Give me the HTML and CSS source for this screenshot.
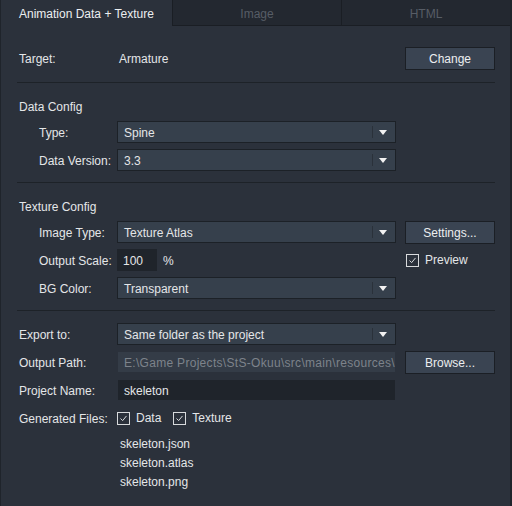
FILE: index.html
```html
<!DOCTYPE html>
<html lang="en">
<head>
  <meta charset="UTF-8">
  <title>Export</title>
  <link rel="stylesheet" href="styles.css">
</head>
<body>
  <div class="window">
    <!-- Tabs -->
    <div class="tabs">
      <div class="tab active">Animation Data + Texture</div>
      <div class="tab">Image</div>
      <div class="tab">HTML</div>
    </div>

    <div class="content">
      <div class="row first">
        <div class="label">Target:</div>
        <div class="value">Armature</div>
        <button class="btn">Change</button>
      </div>
      <div class="sep top"></div>

      <!-- Data Config -->
      <div class="title">Data Config</div>
      <div class="row indent">
        <div class="label">Type:</div>
        <div class="select"><span>Spine</span><i class="arrow"></i></div>
      </div>
      <div class="row indent">
        <div class="label">Data Version:</div>
        <div class="select"><span>3.3</span><i class="arrow"></i></div>
      </div>
      <div class="sep"></div>

      <!-- Texture Config -->
      <div class="title">Texture Config</div>
      <div class="row indent">
        <div class="label">Image Type:</div>
        <div class="select"><span>Texture Atlas</span><i class="arrow"></i></div>
        <button class="btn">Settings...</button>
      </div>
      <div class="row indent">
        <div class="label">Output Scale:</div>
        <div class="input small">100</div>
        <div class="unit">%</div>
        <label class="check preview"><span class="box"><svg viewBox="0 0 13 13"><path d="M3 6.5 L5.5 9 L10 3.5" /></svg></span>Preview</label>
      </div>
      <div class="row indent">
        <div class="label">BG Color:</div>
        <div class="select"><span>Transparent</span><i class="arrow"></i></div>
      </div>
      <div class="sep"></div>

      <!-- Export -->
      <div class="row first-export">
        <div class="label">Export to:</div>
        <div class="select"><span>Same folder as the project</span><i class="arrow"></i></div>
      </div>
      <div class="row">
        <div class="label">Output Path:</div>
        <div class="field disabled">E:\Game Projects\StS-Okuu\src\main\resources\</div>
        <button class="btn">Browse...</button>
      </div>
      <div class="row">
        <div class="label">Project Name:</div>
        <div class="field dark">skeleton</div>
      </div>
      <div class="row gen">
        <div class="label">Generated Files:</div>
        <label class="check"><span class="box"><svg viewBox="0 0 13 13"><path d="M3 6.5 L5.5 9 L10 3.5" /></svg></span>Data</label>
        <label class="check"><span class="box"><svg viewBox="0 0 13 13"><path d="M3 6.5 L5.5 9 L10 3.5" /></svg></span>Texture</label>
      </div>
      <div class="files">
        <div>skeleton.json</div>
        <div>skeleton.atlas</div>
        <div>skeleton.png</div>
      </div>
    </div>
  </div>
</body>
</html>
```

FILE: styles.css
```css
/* General Styling */
body {
  margin: 0;
  background: #2b313b;
  font-family: "Liberation Sans", Arial, sans-serif;
  font-size: 12px;
  color: #e4e6e8;
}

.window {
  width: 512px;
  height: 506px;
  box-sizing: border-box;
  border-left: 1px solid #1f242b;
  border-right: 2px solid #1f242b;
  overflow: hidden;
}

/* Tabs */
.tabs {
  display: flex;
  height: 26px;
  margin-left: -1px;
}

.tab {
  flex: 1;
  display: flex;
  align-items: center;
  justify-content: center;
  padding-top: 2px;
  background: #232830;
  color: #575d66;
  border-left: 1px solid #1a1e24;
  border-bottom: 1px solid #1a1e24;
  box-sizing: border-box;
}

.tab.active {
  flex: none;
  width: 172px;
  justify-content: flex-start;
  padding-left: 19px;
  background: #2b313b;
  color: #eceef0;
  border-left: none;
  border-bottom: none;
}

.content {
  padding: 0 15px 0 16px;
}

.row {
  display: flex;
  align-items: center;
  height: 22px;
  margin-top: 6px;
  padding-left: 2px;
}

.row.first {
  margin-top: 21px;
}

.row.first-export {
  margin-top: 12px;
}

.row.indent {
  padding-left: 22px;
}

.label {
  width: 98px;
  flex: none;
  padding-top: 1px;
}

.row.indent .label {
  width: 78px;
}

.value {
  flex: 1;
  padding-left: 2px;
  padding-top: 1px;
}

.sep {
  height: 1px;
  background: #1d2228;
  margin-top: 11px;
}

.sep.top {
  margin-top: 13px;
}

.title {
  height: 17px;
  line-height: 18px;
  margin-top: 15px;
  padding-left: 2px;
}

/* Dropdowns */
.select {
  position: relative;
  width: 279px;
  height: 22px;
  box-sizing: border-box;
  background: #36404c;
  border: 1px solid #1c2127;
  display: flex;
  align-items: center;
  padding: 1px 0 0 6px;
}

.select::after {
  content: "";
  position: absolute;
  right: 22px;
  top: 4px;
  bottom: 4px;
  width: 1px;
  background: #2a313a;
}

.arrow {
  position: absolute;
  right: 8px;
  top: 8px;
  width: 0;
  height: 0;
  border-left: 4px solid transparent;
  border-right: 4px solid transparent;
  border-top: 5px solid #f2f2f2;
}

/* Buttons */
.btn {
  margin-left: auto;
  width: 90px;
  height: 23px;
  padding: 1px 0 0;
  background: #3a4452;
  border: 1px solid #1b1f25;
  color: #eceef0;
  font-family: inherit;
  font-size: 12px;
}

/* Text fields */
.field {
  width: 279px;
  height: 22px;
  box-sizing: border-box;
  display: flex;
  align-items: center;
  padding: 1px 0 0 6px;
  white-space: nowrap;
  overflow: hidden;
  border: 1px solid #2b313b;
}

.field.disabled {
  background: #343c47;
  color: #7d838b;
  letter-spacing: 0.3px;
}

.field.dark {
  background: #1f242b;
}

.input.small {
  width: 40px;
  height: 22px;
  box-sizing: border-box;
  background: #1f242b;
  display: flex;
  align-items: center;
  padding: 1px 0 0 6px;
}

.unit {
  margin-left: 6px;
  padding-top: 1px;
}

/* Checkboxes */
.check {
  display: flex;
  align-items: center;
}

.box {
  width: 13px;
  height: 13px;
  box-sizing: border-box;
  border: 1px solid #d8dadc;
  margin-right: 6px;
  display: flex;
}

.box svg {
  width: 11px;
  height: 11px;
}

.box path {
  fill: none;
  stroke: #e6e8ea;
  stroke-width: 1.1;
}

.check.preview {
  margin-left: auto;
  width: 89px;
}

.row.gen .check {
  margin-right: 12px;
}

.files {
  margin-top: 6px;
  padding-left: 103px;
  line-height: 19px;
}
```
